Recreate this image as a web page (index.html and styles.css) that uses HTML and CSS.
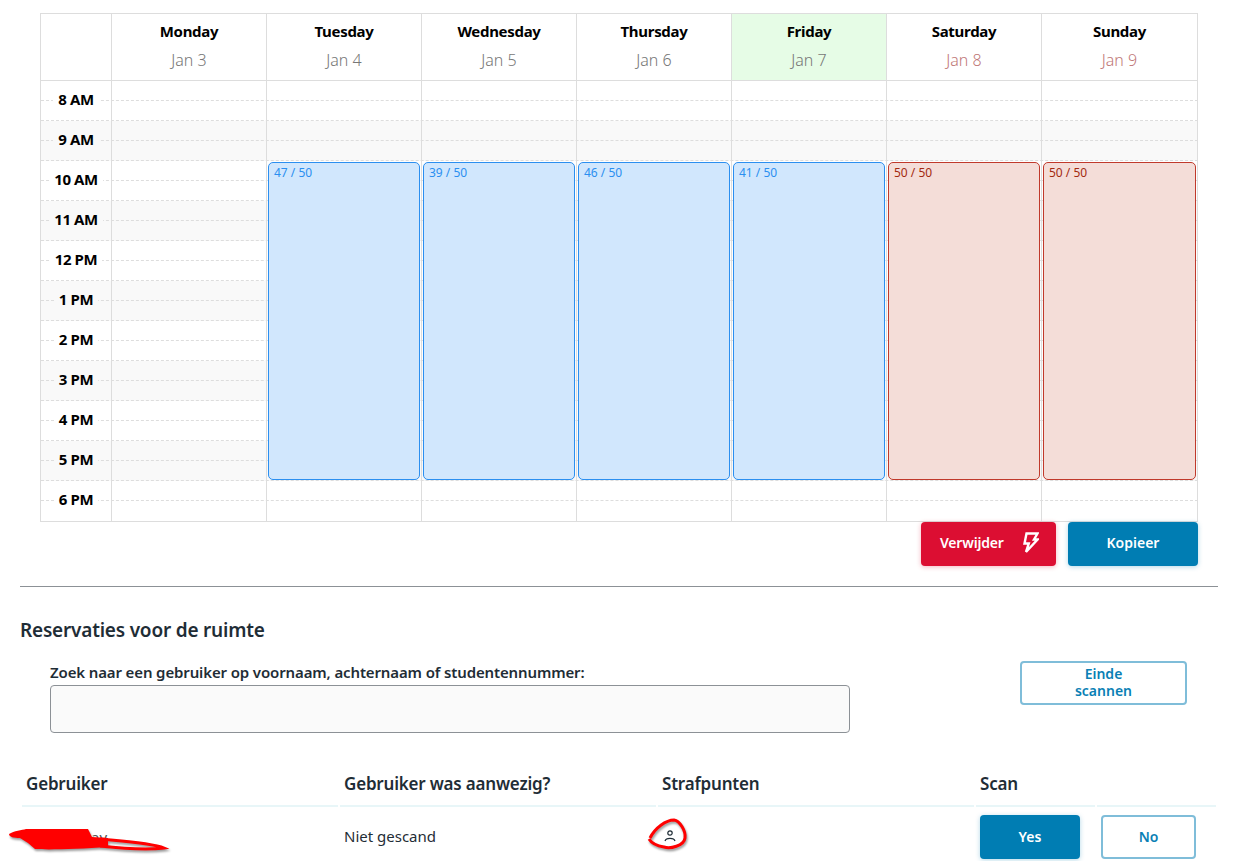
FILE: index.html
```html
<!DOCTYPE html>
<html lang="nl">
  <head>
    <meta charset="UTF-8" />
    <title>Reservaties</title>
    <link rel="stylesheet" href="styles.css">
  </head>
  <body>
    <div class="calendar">
      <div class="cal-head">
        <div class="head-cell"></div>
        <div class="head-cell"><strong>Monday</strong><span>Jan 3</span></div>
        <div class="head-cell"><strong>Tuesday</strong><span>Jan 4</span></div>
        <div class="head-cell"><strong>Wednesday</strong><span>Jan 5</span></div>
        <div class="head-cell"><strong>Thursday</strong><span>Jan 6</span></div>
        <div class="head-cell today"><strong>Friday</strong><span>Jan 7</span></div>
        <div class="head-cell weekend"><strong>Saturday</strong><span>Jan 8</span></div>
        <div class="head-cell weekend"><strong>Sunday</strong><span>Jan 9</span></div>
      </div>

      <div class="cal-body">
        <div class="hour"><div class="half"></div><div class="half"></div></div>
        <div class="hour"><div class="half"></div><div class="half"></div></div>
        <div class="hour"><div class="half"></div><div class="half"></div></div>
        <div class="hour"><div class="half"></div><div class="half"></div></div>
        <div class="hour"><div class="half"></div><div class="half"></div></div>
        <div class="hour"><div class="half"></div><div class="half"></div></div>
        <div class="hour"><div class="half"></div><div class="half"></div></div>
        <div class="hour"><div class="half"></div><div class="half"></div></div>
        <div class="hour"><div class="half"></div><div class="half"></div></div>
        <div class="hour"><div class="half"></div><div class="half"></div></div>
        <div class="hour"><div class="half"></div><div class="half"></div></div>

        <div class="cal-columns">
          <div class="time-col">
            <div class="time"><span>8 AM</span></div>
            <div class="time"><span>9 AM</span></div>
            <div class="time"><span>10 AM</span></div>
            <div class="time"><span>11 AM</span></div>
            <div class="time"><span>12 PM</span></div>
            <div class="time"><span>1 PM</span></div>
            <div class="time"><span>2 PM</span></div>
            <div class="time"><span>3 PM</span></div>
            <div class="time"><span>4 PM</span></div>
            <div class="time"><span>5 PM</span></div>
            <div class="time"><span>6 PM</span></div>
          </div>
          <div class="day-col"></div>
          <div class="day-col"><div class="event">47 / 50</div></div>
          <div class="day-col"><div class="event">39 / 50</div></div>
          <div class="day-col"><div class="event">46 / 50</div></div>
          <div class="day-col"><div class="event">41 / 50</div></div>
          <div class="day-col"><div class="event full">50 / 50</div></div>
          <div class="day-col"><div class="event full">50 / 50</div></div>
        </div>
      </div>
    </div>

    <div class="cal-actions">
      <button class="btn btn-danger" type="button">
        Verwijder
        <svg class="bolt" width="16" height="22" viewBox="0 0 16 22" fill="none" stroke="#fff" stroke-width="2.4" stroke-linejoin="miter">
          <path d="M3.5 1.5 H14.5 L11 7.5 H14.5 L3 20 L5.8 11.5 H1.5 Z" />
        </svg>
      </button>
      <button class="btn btn-primary btn-copy" type="button">Kopieer</button>
    </div>

    <hr class="divider" />

    <h2>Reservaties voor de ruimte</h2>

    <div class="search-row">
      <div class="search-field">
        <label for="search">Zoek naar een gebruiker op voornaam, achternaam of studentennummer:</label>
        <input id="search" type="text" />
      </div>
      <button class="btn btn-outline btn-scan" type="button">Einde<br />scannen</button>
    </div>

    <table class="users">
      <thead>
        <tr>
          <th>Gebruiker</th>
          <th>Gebruiker was aanwezig?</th>
          <th>Strafpunten</th>
          <th>Scan</th>
          <th></th>
        </tr>
      </thead>
      <tbody>
        <tr>
          <td class="name-cell">
            <span class="name">ay</span>
            <svg class="scribble" width="170" height="30" viewBox="0 0 170 30" fill="none">
              <path class="scribble-fill" d="M1 10 C6 7 14 6 18 5 L80 5 L84 13 L100 14 L100 23 C70 25 40 26 27 25 L20 19 L12 14 C6 14 1 13 1 10 Z" />
              <path class="scribble-ink" d="M92 15 C115 17 145 19 156 24 C140 26 110 24 92 22" />
            </svg>
          </td>
          <td class="status-cell">Niet gescand</td>
          <td class="points-cell">
            <svg class="person" width="14" height="14" viewBox="0 0 14 14" fill="none" stroke="#1f2d36" stroke-width="1.2">
              <circle cx="7" cy="4" r="2.2" />
              <path d="M2 12 C3 8.6 11 8.6 12 12" />
            </svg>
            <svg class="ring" width="44" height="36" viewBox="0 0 44 36" fill="none">
              <path class="ring-ink" d="M6 20 C11 10 22 2 30 2 C36 3 42 13 41 20 C40 28 26 31 20 29 C14 28 8 26 5 21" />
            </svg>
          </td>
          <td><button class="btn btn-primary btn-yes" type="button">Yes</button></td>
          <td><button class="btn btn-outline btn-no" type="button">No</button></td>
        </tr>
      </tbody>
    </table>
  </body>
</html>
```

FILE: styles.css
```css
* {
  box-sizing: border-box;
}

body {
  margin: 0;
  padding: 13px 18px 0 20px;
  font-family: 'Noto Sans', 'Open Sans', sans-serif;
  background: #fff;
  color: #1f2d36;
}

.calendar {
  margin: 0 0 0 20px;
  width: 1158px;
  border: 1px solid #ddd;
  border-right: none;
}

.cal-head,
.cal-columns {
  display: grid;
  grid-template-columns: 71px repeat(6, 155px) 1fr;
}

.cal-head {
  height: 67px;
  border-bottom: 1px solid #ddd;
}

.head-cell {
  display: flex;
  flex-direction: column;
  align-items: center;
  gap: 9px;
  padding-top: 7px;
  border-right: 1px solid #ddd;
  font-size: 15px;
  line-height: 20px;
}

.head-cell strong {
  color: #000;
  font-weight: 700;
  letter-spacing: -0.3px;
}

.head-cell span {
  color: #777;
  font-weight: 300;
  font-size: 16px;
}

.today {
  background: #e6fce6;
}

.weekend span {
  color: #c07878;
}

.cal-body {
  position: relative;
}

.hour:nth-child(even) {
  background: #f9f9f9;
}

.half {
  height: 20px;
  border-bottom: 1px dashed #ddd;
}

.hour:nth-child(11) .half:last-child {
  border-bottom: none;
}

.cal-columns {
  position: absolute;
  inset: 0;
}

.time-col,
.day-col {
  border-right: 1px solid #ddd;
}

.time {
  height: 40px;
  padding-bottom: 5px;
  display: flex;
  align-items: center;
  justify-content: center;
  font-size: 15px;
  font-weight: 700;
  letter-spacing: -0.4px;
  color: #000;
}

.time span {
  padding: 0 5px;
  line-height: 20px;
}

.time:nth-child(odd) span {
  background: #fff;
}

.time:nth-child(even) span {
  background: #f9f9f9;
}

.event {
  margin: 81px 1px 0 1px;
  height: 318px;
  padding: 3px 5px;
  font-size: 12px;
  line-height: 14px;
  color: #2b8ff0;
  background: #d1e7fd;
  border: 1px solid #2b8ff0;
  border-radius: 5px;
}

.event.full {
  color: #a32a10;
  background: #f4ddd8;
  border-color: #c0392b;
}

.cal-actions {
  display: flex;
  justify-content: flex-end;
  gap: 12px;
  padding-right: 20px;
}

.btn {
  font-family: inherit;
  font-size: 14px;
  font-weight: 600;
  border-radius: 4px;
  border: none;
  cursor: pointer;
}

.btn-danger {
  display: flex;
  align-items: center;
  justify-content: space-between;
  width: 135px;
  height: 44px;
  padding: 0 17px 3px 19px;
  letter-spacing: -0.2px;
  color: #fff;
  background: #dc0e32;
  box-shadow: 0 1px 5px rgba(220, 14, 50, 0.3);
}

.btn-primary {
  color: #fff;
  background: #007db3;
  box-shadow: 0 1px 5px rgba(0, 125, 179, 0.3);
}

.btn-copy {
  width: 130px;
  height: 44px;
  padding-bottom: 5px;
}

.btn-outline {
  color: #0a7fb5;
  background: #fff;
  border: 2px solid #7fbdd9;
}

.divider {
  margin: 20px 0 0 0;
  border: none;
  border-top: 1px solid #8c9196;
}

h2 {
  margin: 30px 0 0 0;
  font-size: 19px;
  line-height: 26px;
  font-weight: 600;
  letter-spacing: -0.2px;
}

.search-row {
  display: flex;
  align-items: flex-start;
  margin-top: 19px;
  padding-left: 30px;
}

.search-field {
  width: 800px;
}

label {
  display: block;
  font-size: 15px;
  line-height: 20px;
  font-weight: 600;
  letter-spacing: -0.13px;
}

input {
  display: block;
  width: 100%;
  height: 48px;
  margin-top: 3px;
  background: #fafafa;
  border: 1px solid #8c9196;
  border-radius: 4px;
}

.btn-scan {
  width: 167px;
  height: 44px;
  margin: -1px 0 0 170px;
  padding: 0 0 2px 0;
  line-height: 17px;
}

.users {
  width: 1198px;
  margin-top: 26px;
  border-spacing: 2px;
  table-layout: fixed;
}

th {
  height: 46px;
  padding: 0 4px;
  text-align: left;
  font-size: 17px;
  font-weight: 600;
  letter-spacing: -0.2px;
  border-bottom: 2px solid #e8f6f8;
}

th:nth-child(1),
th:nth-child(2),
th:nth-child(3) {
  width: 316px;
}

td {
  padding: 6px 4px 0 4px;
  font-size: 15px;
}

.status-cell {
  padding-bottom: 2px;
}

.btn-yes {
  width: 100px;
  height: 44px;
  padding-bottom: 2px;
}

.btn-no {
  width: 95px;
  height: 44px;
  padding-bottom: 2px;
}

.name-cell,
.points-cell {
  position: relative;
}

.name {
  margin-left: 65px;
  color: #555;
}

.scribble {
  position: absolute;
  left: -14px;
  top: 15px;
  filter: drop-shadow(1px 2px 1px rgba(0, 0, 0, 0.4));
}

.scribble-ink,
.ring-ink {
  stroke: #f00;
  stroke-width: 3;
}

.scribble-fill {
  fill: #f00;
}

.person {
  display: block;
  margin: -2px 0 0 1px;
}

.ring {
  position: absolute;
  left: -14px;
  top: 9px;
  filter: drop-shadow(1px 2px 1px rgba(0, 0, 0, 0.4));
}
```
